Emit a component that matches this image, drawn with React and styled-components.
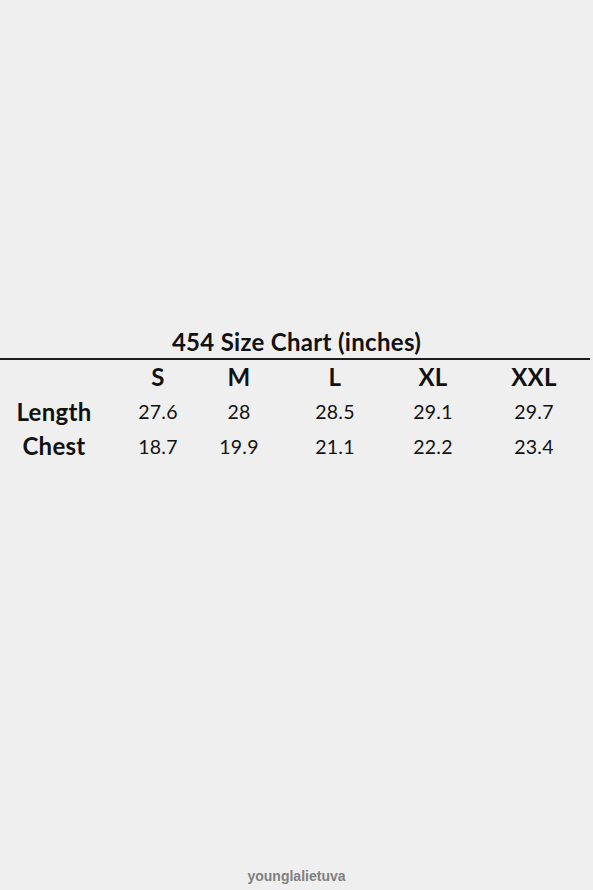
import styled, { createGlobalStyle } from "styled-components";

const GlobalStyle = createGlobalStyle`
  html, body {
    margin: 0;
    padding: 0;
    background: #efefef;
    overflow: hidden;
  }
`;

const Page = styled.div`
  display: flex;
  flex-direction: column;
  width: 593px;
  height: 890px;
  background: #efefef;
  font-family: Lato, "Open Sans", sans-serif;
  color: #111;
`;

const Chart = styled.section`
  display: flex;
  flex-direction: column;
  margin-top: 326px;
`;

const Title = styled.h1`
  margin: 0;
  text-align: center;
  font-size: 24px;
  font-weight: 700;
  line-height: 32px;
  letter-spacing: 0.3px;
`;

const Rule = styled.div`
  width: 590px;
  height: 2px;
  background: #1c1c1c;
`;

const Table = styled.div`
  display: grid;
  grid-template-columns: 108px 100px 62px 130px 66px 136px;
  grid-auto-rows: 34.5px;
  align-items: center;
  justify-items: center;
`;

const Cell = styled.div`
  font-size: ${(p) => (p.$head ? "24px" : "19.5px")};
  font-weight: ${(p) => (p.$head ? 700 : 400)};
  letter-spacing: ${(p) => (p.$head ? "0.3px" : "0.2px")};
  line-height: 1;
`;

const Footer = styled.footer`
  margin-top: auto;
  padding-bottom: 6px;
  text-align: center;
  font-family: "Liberation Sans", Arial, sans-serif;
  font-size: 14px;
  font-weight: 700;
  color: #808080;
`;

const sizes = ["S", "M", "L", "XL", "XXL"];
const rows = [
  { label: "Length", values: ["27.6", "28", "28.5", "29.1", "29.7"] },
  { label: "Chest", values: ["18.7", "19.9", "21.1", "22.2", "23.4"] },
];

const App = () => {
  return (
    <Page>
      <GlobalStyle />
      <Chart>
        <Title>454 Size Chart (inches)</Title>
        <Rule />
        <Table>
          <Cell />
          {sizes.map((s) => (
            <Cell key={s} $head>
              {s}
            </Cell>
          ))}
          {rows.map((row) => [
            <Cell key={row.label} $head>
              {row.label}
            </Cell>,
            ...row.values.map((v, i) => <Cell key={row.label + i}>{v}</Cell>),
          ])}
        </Table>
      </Chart>
      <Footer>younglalietuva</Footer>
    </Page>
  );
};

export default App;
